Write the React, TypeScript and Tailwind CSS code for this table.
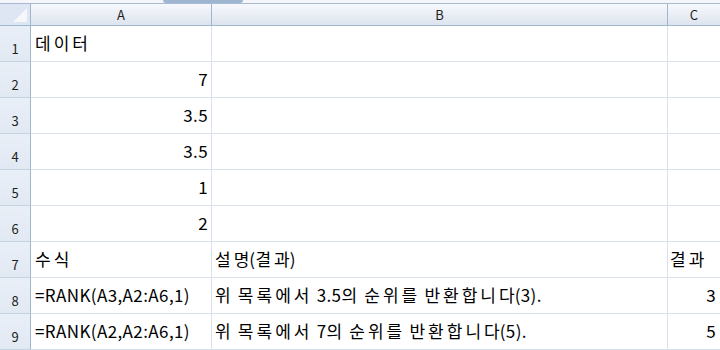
import React from 'react';

type Row = { a: string; b: string; c: string; aRight?: boolean };

const rows: Row[] = [
  { a: '데이터', b: '', c: '' },
  { a: '7', b: '', c: '', aRight: true },
  { a: '3.5', b: '', c: '', aRight: true },
  { a: '3.5', b: '', c: '', aRight: true },
  { a: '1', b: '', c: '', aRight: true },
  { a: '2', b: '', c: '', aRight: true },
  { a: '수식', b: '설명(결과)', c: '결과' },
  { a: '=RANK(A3,A2:A6,1)', b: '위 목록에서 3.5의 순위를 반환합니다(3).', c: '3' },
  { a: '=RANK(A2,A2:A6,1)', b: '위 목록에서 7의 순위를 반환합니다(5).', c: '5' },
];

const cols = 'grid grid-cols-[31px_181px_456px_1fr]';
const font = { fontFamily: '"Noto Sans CJK KR", "Noto Sans", sans-serif' };

// Hangul in the screenshot is set wider than the latin text, so split the runs
const CellText = ({ text }: { text: string }) => {
  const parts = text.split(/([\uAC00-\uD7A3]+)/).filter(Boolean);
  return (
    <span className="leading-[20px] whitespace-nowrap">
      {parts.map((p, i) => {
        if (!/[\uAC00-\uD7A3]/.test(p)) {
          return <span key={i} className="text-[17px] tracking-[0.4px]">{p}</span>;
        }
        const next = parts[i + 1];
        const tight = next !== undefined && !next.startsWith(' ');
        if (!tight) {
          return <span key={i} className="text-[17px] tracking-[3px]">{p}</span>;
        }
        // no extra spacing after the last syllable when latin text follows directly
        return (
          <span key={i} className="text-[17px]">
            <span className="tracking-[3px]">{p.slice(0, -1)}</span>
            {p.slice(-1)}
          </span>
        );
      })}
    </span>
  );
};

const App = () => {
  return (
    <div className="w-[720px] h-[350px] overflow-hidden bg-white text-black" style={font}>
      {/* strip under the formula bar */}
      <div className="flex h-[4px] bg-[#f4f6fa] border-b border-[#a7bad2]">
        <div className="w-[163px]" />
        <div className="w-[80px] h-[3px] bg-[#9fb6d3] rounded-b-sm" />
      </div>

      {/* column headers */}
      <div className={`${cols} h-[22px] bg-gradient-to-b from-[#f6f8fc] to-[#dde4ee] border-b border-[#9eb6ce] text-[13px] text-[#1e1e1e]`}>
        <div className="relative border-r border-[#9eb6ce] bg-[#dde6f2]">
          <div className="absolute right-[3px] bottom-[3px] w-0 h-0 border-l-[14px] border-l-transparent border-b-[14px] border-b-[#f5f7fa]" />
        </div>
        <div className="flex items-center justify-center border-r border-[#9eb6ce]">A</div>
        <div className="flex items-center justify-center border-r border-[#9eb6ce]">B</div>
        <div className="flex items-center justify-center">C</div>
      </div>

      {rows.map((r, i) => (
        <div key={i} className={`${cols} h-[36px]`}>
          <div className="flex items-end justify-center pb-[3px] text-[13px] text-[#1e1e1e] bg-gradient-to-b from-[#e9eff7] to-[#e2e9f3] border-r border-[#9eb6ce] border-b border-b-[#c5d2e3]">
            {i + 1}
          </div>
          <div
            className={`flex items-end pb-[8px] border-r border-b border-[#dae0ec] ${
              r.aRight ? 'justify-end pr-[3px]' : 'pl-[4px]'
            }`}
          >
            <CellText text={r.a} />
          </div>
          <div className="flex items-end pb-[8px] pl-[3px] border-r border-b border-[#dae0ec]">
            <CellText text={r.b} />
          </div>
          <div
            className={`flex items-end pb-[8px] border-b border-[#dae0ec] ${
              i === 6 ? 'pl-[2px]' : 'justify-end pr-[4px]'
            }`}
          >
            <CellText text={r.c} />
          </div>
        </div>
      ))}
    </div>
  );
};

export default App;
